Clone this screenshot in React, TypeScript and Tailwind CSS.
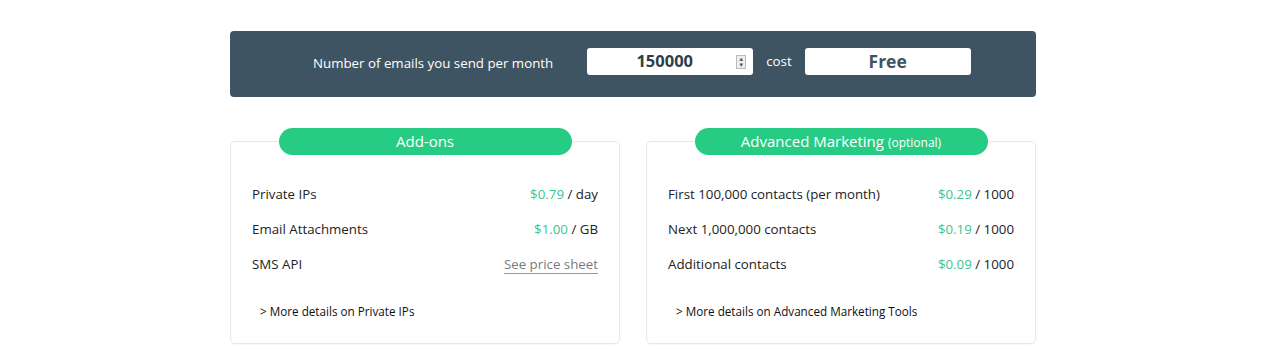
const addons = [
  { label: "Private IPs", price: "$0.79", unit: "day" },
  { label: "Email Attachments", price: "$1.00", unit: "GB" },
  { label: "SMS API", link: "See price sheet" },
];

const marketing = [
  { label: "First 100,000 contacts (per month)", price: "$0.29", unit: "1000" },
  { label: "Next 1,000,000 contacts", price: "$0.19", unit: "1000" },
  { label: "Additional contacts", price: "$0.09", unit: "1000" },
];

type Row = { label: string; price?: string; unit?: string; link?: string };

const PriceCard = ({ title, note, rows, more }: { title: string; note?: string; rows: Row[]; more: string }) => (
  <div className="flex-1 border border-[#e8e8e8] rounded-[5px] flex flex-col pb-[21px] shadow-[0_1px_1px_rgba(0,0,0,0.03)]">
    <div className="-mt-[14px] mx-auto w-[293px] h-[27px] rounded-full bg-[#27cc84] text-white flex items-center justify-center text-[15px] leading-none">
      {title}
      {note && <span className="text-[12px] ml-[4px] mt-[2px]">{note}</span>}
    </div>
    <div className="mt-[22px] flex flex-col">
      {rows.map((r) => (
        <div key={r.label} className="h-[35px] px-[21px] flex items-center justify-between text-[13.3px] text-[#222]">
          <span>{r.label}</span>
          {r.link ? (
            <span className="text-[#7a7a7a] underline decoration-[#999] underline-offset-[4px]">{r.link}</span>
          ) : (
            <span>
              <span className="text-[#3cc68a]">{r.price}</span> / {r.unit}
            </span>
          )}
        </div>
      ))}
    </div>
    <div className="mt-[20px] px-[29px] h-[20px] flex items-center text-[11.7px] text-[#111]">&gt; {more}</div>
  </div>
);

export default function App() {
  return (
    <div className="w-[1277px] h-[355px] bg-white overflow-hidden" style={{ fontFamily: '"Open Sans", "Liberation Sans", sans-serif' }}>
      <div className="ml-[230px] w-[806px] pt-[31px]">
        <div className="h-[66px] bg-[#3f5463] rounded-[4px] flex items-center pl-[83px] text-white text-[13.3px]">
          <span>Number of emails you send per month</span>
          <div className="ml-[34px] mb-[5px] w-[166px] h-[27px] bg-white rounded-[3px] flex items-center">
            <span className="flex-1 text-center font-bold text-[16.5px] text-[#2f3f4a] pl-[6px]">150000</span>
            <div className="w-[10px] h-[14px] mr-[7px] border border-[#bbb] bg-[#eee] flex flex-col items-center justify-center text-[6px] leading-[6px] text-[#555]">
              <span>▲</span>
              <span>▼</span>
            </div>
          </div>
          <span className="ml-[13px] mb-[4px]">cost</span>
          <div className="ml-[13px] mb-[5px] w-[166px] h-[27px] bg-white rounded-[3px] flex items-center justify-center font-bold text-[17.5px] text-[#3f5463]">
            Free
          </div>
        </div>
        <div className="mt-[44px] flex gap-[26px]">
          <PriceCard title="Add-ons" rows={addons} more="More details on Private IPs" />
          <PriceCard title="Advanced Marketing" note="(optional)" rows={marketing} more="More details on Advanced Marketing Tools" />
        </div>
      </div>
    </div>
  );
}
